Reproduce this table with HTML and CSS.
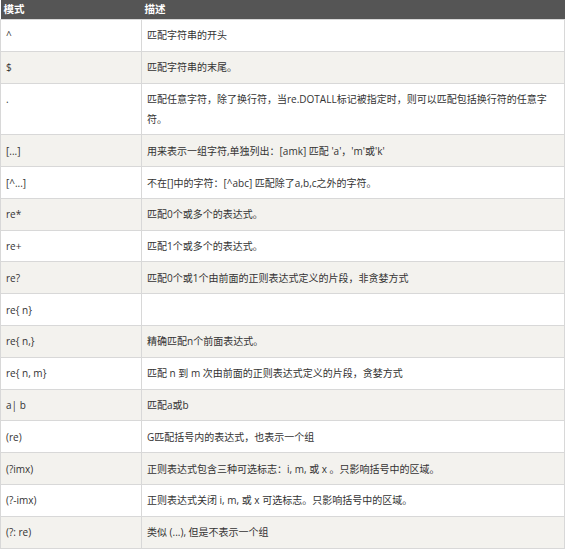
FILE: index.html
```html
<!DOCTYPE html>
<html lang="zh-CN">
<head>
<meta charset="utf-8">
<title>正则表达式模式</title>
<link rel="stylesheet" href="styles.css">
</head>
<body>
<table class="reference">
  <colgroup>
    <col class="col-pattern">
    <col class="col-desc">
  </colgroup>
  <thead>
    <tr><th>模式</th><th>描述</th></tr>
  </thead>
  <tbody>
    <tr><td>^</td><td>匹配字符串的开头</td></tr>
    <tr><td>$</td><td>匹配字符串的末尾。</td></tr>
    <tr><td>.</td><td>匹配任意字符，除了换行符，当re.DOTALL标记被指定时，则可以匹配包括换行符的任意字符。</td></tr>
    <tr><td>[...]</td><td>用来表示一组字符,单独列出：[amk] 匹配 'a'，'m'或'k'</td></tr>
    <tr><td>[^...]</td><td>不在[]中的字符：[^abc] 匹配除了a,b,c之外的字符。</td></tr>
    <tr><td>re*</td><td>匹配0个或多个的表达式。</td></tr>
    <tr><td>re+</td><td>匹配1个或多个的表达式。</td></tr>
    <tr><td>re?</td><td>匹配0个或1个由前面的正则表达式定义的片段，非贪婪方式</td></tr>
    <tr><td>re{ n}</td><td></td></tr>
    <tr><td>re{ n,}</td><td>精确匹配n个前面表达式。</td></tr>
    <tr><td>re{ n, m}</td><td>匹配 n 到 m 次由前面的正则表达式定义的片段，贪婪方式</td></tr>
    <tr><td>a| b</td><td>匹配a或b</td></tr>
    <tr><td>(re)</td><td>G匹配括号内的表达式，也表示一个组</td></tr>
    <tr><td>(?imx)</td><td>正则表达式包含三种可选标志：i, m, 或 x 。只影响括号中的区域。</td></tr>
    <tr><td>(?-imx)</td><td>正则表达式关闭 i, m, 或 x 可选标志。只影响括号中的区域。</td></tr>
    <tr><td>(?: re)</td><td>类似 (...), 但是不表示一个组</td></tr>
  </tbody>
</table>
</body>
</html>
```
FILE: styles.css
```css
html, body {
  margin: 0;
  padding: 0;
  background: #fff;
}
body {
  font-family: "Open Sans", "Noto Sans CJK SC", sans-serif;
  font-size: 10px;
  color: #333;
}
.reference {
  border-collapse: collapse;
  table-layout: fixed;
  width: 564px;
}
.col-pattern { width: 141px; }
.col-desc { width: 423px; }
.reference th {
  background: #555;
  color: #fff;
  font-weight: bold;
  font-size: 10.5px;
  text-align: left;
  padding: 3px 3px;
  line-height: 13px;
  border: none;
}
.reference td {
  border: 1px solid #d8d8d8;
  padding: 5.4px 5px;
  line-height: 20px;
  vertical-align: top;
}
.reference tbody tr:nth-child(odd) { background: #fff; }
.reference tbody tr:nth-child(even) { background: #f3f2ee; }
```
